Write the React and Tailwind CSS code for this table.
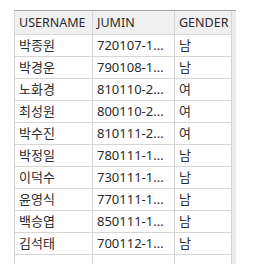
const rows = [
  ["박종원", "720107-1...", "남"],
  ["박경운", "790108-1...", "남"],
  ["노화경", "810110-2...", "여"],
  ["최성원", "800110-2...", "여"],
  ["박수진", "810111-2...", "여"],
  ["박정일", "780111-1...", "남"],
  ["이덕수", "730111-1...", "남"],
  ["윤영식", "770111-1...", "남"],
  ["백승엽", "850111-1...", "남"],
  ["김석태", "700112-1...", "남"],
  ["", "", ""],
];

const font = { fontFamily: '"Noto Sans", "Noto Sans CJK KR", sans-serif' };

export default function App() {
  return (
    <div className="w-[264px] h-[264px] overflow-hidden bg-white pl-[14px] pt-[10px] text-[#2b2b2b]" style={font}>
      <div className="flex w-[222px]">
        <div className="border-t border-[#a8a8a8]">
          {/* header */}
          <div className="grid grid-cols-[78px_82px_58px] h-[24px] bg-[#f0f0f0] border-b border-[#d6d6d6] text-[12.5px] leading-[23px]">
            <div className="border-l border-[#d6d6d6] pl-[4px]">USERNAME</div>
            <div className="border-l border-[#d6d6d6] pl-[4px]">JUMIN</div>
            <div className="border-l border-r border-[#d6d6d6] pl-[4px]">GENDER</div>
          </div>
          {rows.map((r, i) => (
            <div key={i} className="grid grid-cols-[78px_82px_58px] h-[22px] border-b border-[#d6d6d6] text-[13px] leading-[21px]">
              <div className="border-l border-[#d6d6d6] pl-[4px]">{r[0]}</div>
              <div className="border-l border-[#d6d6d6] pl-[4px]">{r[1]}</div>
              <div className="border-l border-r border-[#d6d6d6] pl-[4px]">{r[2]}</div>
            </div>
          ))}
        </div>
        <div className="w-[4px] bg-[#ececec] border-t border-[#a8a8a8]" />
      </div>
    </div>
  );
}
